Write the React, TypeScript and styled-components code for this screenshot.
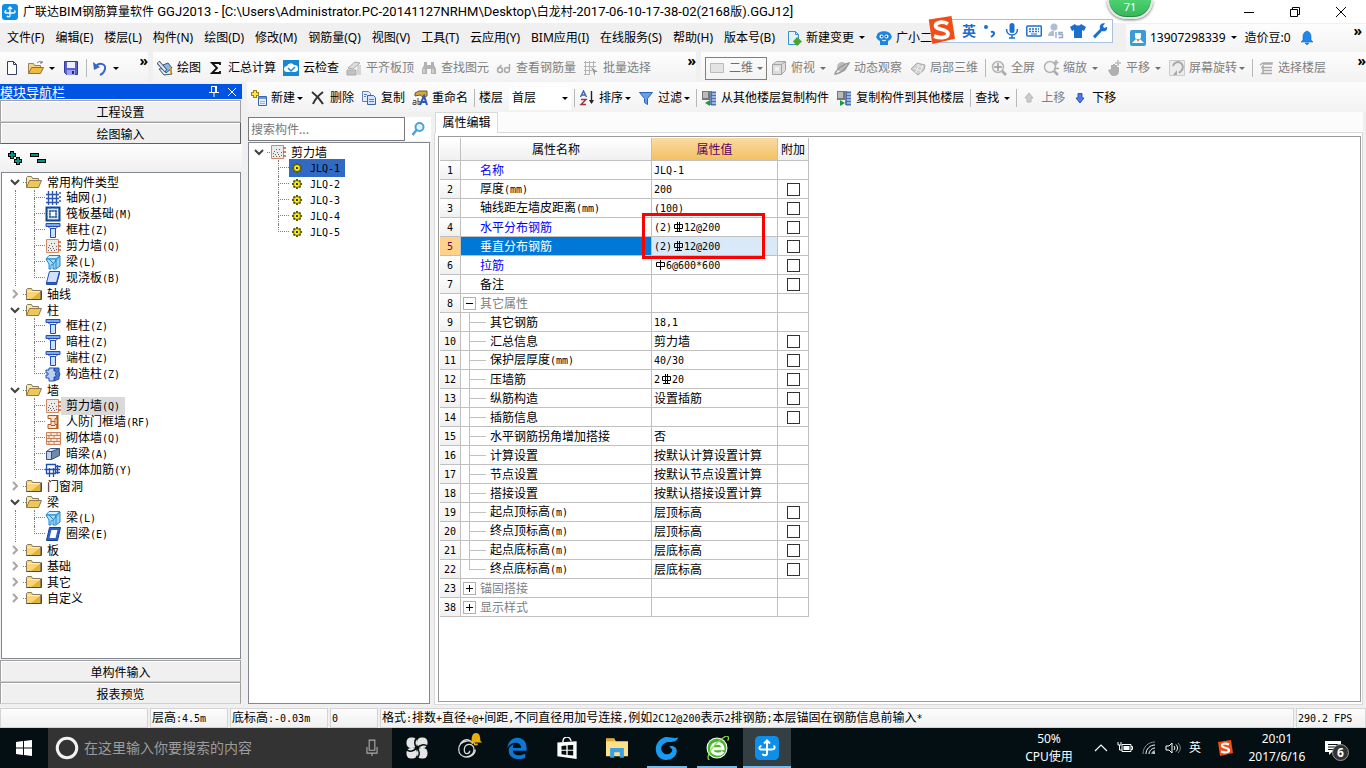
import React from "react";
import styled, { createGlobalStyle, css } from "styled-components";

const UI = `"Noto Sans", "Noto Sans CJK SC", sans-serif`;
const SONG = `"Noto Sans CJK SC", sans-serif`;

const Global = createGlobalStyle`
  *, *::before, *::after { box-sizing: border-box; }
  body { margin: 0; background: #f0f0f0; color: #000; font: 12px/16px ${UI}; }
  button, input, select { font: inherit; color: inherit; margin: 0; padding: 0; border: 0; background: none; border-radius: 0; outline: 0; }
  button { white-space: nowrap; cursor: default; }
  svg { display: block; flex: none; }
  ul { list-style: none; margin: 0; padding: 0; }
`;

/* ---------- icons ---------- */

const column = (
  <>
    <path d="M1 1.500h14v3H1z" fill="#7fa8ee" stroke="#1f4fb4" />
    <path d="M3 4.500h10l-2 2H5z" fill="#dfe9ff" stroke="#1f4fb4" />
    <path d="M5.500 6.500h5v9h-5z" fill="#cfe0ff" stroke="#1f4fb4" />
  </>
);
const scope = (
  <>
    <circle cx="7" cy="7" r="5.500" fill="#f4f4f4" stroke="#b4b4b4" strokeWidth="1.500" />
    <path d="M11 11l4 4" stroke="#aaa" strokeWidth="2.500" />
  </>
);
const floors = (
  <>
    <path d="M1 1h8v9H1z" fill="#777" />
    <path d="M2 3h5M2 5h5M2 7h5" stroke="#fff" />
    <path d="M10 2.500h5M10 5.500h5M10 8.500h5M10 11.500h5M10 14.500h5" stroke="#4a72b8" strokeWidth="2" />
    <path d="M10 1v14" stroke="#3a62a8" strokeWidth="1.500" />
  </>
);

const icons: Record<string, React.ReactNode> = {
  newDoc: <path d="M3.500 1.500h6l3 3v10h-9zM9.500 1.500v3h3" fill="#fff" stroke="#33415f" />,
  open: (
    <>
      <path d="M0.500 13.500v-10h5l1 2h6v2" fill="#f3d58a" stroke="#9b8453" />
      <path d="M0.500 13.500l3-6h12l-3 6z" fill="#f2b93f" stroke="#8b7341" />
      <path d="M9 3c2-2 4-2 5 0m0 0v-2m0 2h-2" fill="none" stroke="#5f7488" />
    </>
  ),
  save: (
    <>
      <path d="M1.500 1.500h13v13h-11l-2-2z" fill="#5a62cf" stroke="#333a9a" />
      <path d="M4 2h8v6H4z" fill="#eef1fb" />
      <path d="M4 10h8v5H4z" fill="#9aa3e8" />
      <path d="M9 11h2v3H9z" fill="#22287a" />
    </>
  ),
  undo: (
    <>
      <path d="M4 6c4-4 10-2 9 3-.5 3-3 5-5 6" fill="none" stroke="#3a66c4" strokeWidth="2" />
      <path d="M1 2l1 8 6-3z" fill="#3a66c4" />
    </>
  ),
  draw: (
    <>
      <path d="M2 9l5 6 8-1-3-6z" fill="#e7eef6" stroke="#39556f" />
      <path d="M6 5l5-2 4 5-6 5z" fill="#8db6e6" stroke="#39556f" />
      <path d="M1 2l8 9" stroke="#39556f" strokeWidth="4" />
      <path d="M1.500 2.500l7 8" stroke="#dfe9f5" strokeWidth="2" />
      <path d="M14 8v5" stroke="#d99a23" strokeWidth="2" />
    </>
  ),
  sigma: <path d="M12 5V3H4l5 5-5 5h8v-2" fill="none" stroke="#111" strokeWidth="1.800" />,
  cloud: (
    <>
      <path d="M0 0h16v16H0z" fill="#1688d4" />
      <path d="M4 12a3 3 0 010-6 4 4 0 017-1 3.500 3.500 0 011 7z" fill="#fff" />
      <path d="M5 8l3 3 4-4" fill="none" stroke="#1688d4" strokeWidth="1.500" />
    </>
  ),
  align: (
    <>
      <path d="M1 10h9v5H1z" fill="#c2c2c2" stroke="#aaa" />
      <path d="M2 8l7-6 5 1-7 6z" fill="#ddd" stroke="#aaa" />
      <path d="M12 5v10M14 5v10" stroke="#b4b4b4" />
    </>
  ),
  binocular: (
    <>
      <path d="M3 2h3v3h4V2h3v3l2 4v5h-5V9H6v5H1V9l2-4z" fill="#b2b2b2" />
      <path d="M3 9v4M12 9v4" stroke="#eee" />
    </>
  ),
  glasses: (
    <>
      <circle cx="4" cy="10" r="2.500" fill="none" stroke="#aaa" strokeWidth="1.500" />
      <circle cx="11" cy="10" r="2.500" fill="none" stroke="#aaa" strokeWidth="1.500" />
      <path d="M1.500 9l4-4M13.500 9V4" stroke="#aaa" strokeWidth="1.500" />
    </>
  ),
  batch: (
    <>
      <path d="M1 2.500h12M1 6.500h12M1 10.500h8M1 14.500h6M2.500 1v14M6.500 1v14M10.500 1v7" stroke="#b4b4b4" fill="none" />
      <path d="M8 7l7 5h-3v4z" fill="#999" />
    </>
  ),
  flat: <path d="M1.500 3.500h13v9h-13z" fill="#e3e3e3" stroke="#bbb" />,
  cube: (
    <>
      <path d="M1.500 4.500l4-3h9v9l-4 4h-9zM1.500 4.500h9v10M10.500 4.500l4-3" fill="#dcdcdc" stroke="#a4a4a4" />
      <path d="M4 7h4v4H4z" fill="#f2f2f2" />
    </>
  ),
  orbit: (
    <>
      <circle cx="8" cy="7" r="5" fill="#bbb" />
      <path d="M1 14c1-5 9-10 14-11-2 5-9 11-14 11z" fill="none" stroke="#999" strokeWidth="1.500" />
    </>
  ),
  part3d: (
    <>
      <path d="M1 9l6-6 8 2-1 5-6 5z" fill="#cfcfcf" stroke="#aaa" />
      <path d="M4 8l7 3M7 5l6 3M6 13l3-9M10 13l3-8" stroke="#eee" />
    </>
  ),
  fit: (
    <>
      {scope}
      <path d="M7 3v8M3 7h8" stroke="#999" strokeWidth="1.500" />
    </>
  ),
  zoomIn: (
    <>
      {scope}
      <path d="M13 0v5M10.500 2.500h5M11 8.500h5" stroke="#aaa" strokeWidth="1.500" />
    </>
  ),
  pan: (
    <>
      <path d="M2 10l3-1V5h2v2-3h2v3-2h2v3-1h2v5c0 2-2 4-5 4s-4-2-6-6z" fill="#b0b0b0" />
      <path d="M12 0v6M9 3h6" stroke="#bbb" strokeWidth="1.500" />
    </>
  ),
  rotate: (
    <>
      <path d="M.5.5h15v15H.5z" fill="#ececec" stroke="#ccc" />
      <path d="M4 6a5 5 0 118 5l-2 2" fill="none" stroke="#aaa" strokeWidth="2" />
      <path d="M8 10v5h-4z" fill="#aaa" />
    </>
  ),
  pickFloor: <path d="M2 5l3-2h9v1H5M3 7.500h11M5 10.500h9M3 13.500h11M5 5v9" fill="none" stroke="#aaa" strokeWidth="1.500" />,
  create: (
    <>
      <path d="M4 0v8M0 4h8" stroke="#9b8409" strokeWidth="4" />
      <path d="M4 1v6M1 4h6" stroke="#ffe34d" strokeWidth="2" />
      <path d="M7.500 6.500h8v9h-8z" fill="#e6eefb" stroke="#3c64a8" />
      <path d="M8 8h7" stroke="#6d95d8" strokeWidth="2" />
      <path d="M9 11.500h5M9 13.500h5" stroke="#9db5dc" />
    </>
  ),
  remove: <path d="M2 2c4 3 8 7 11 12M13 2C9 5 5 9 3 14" fill="none" stroke="#333" strokeWidth="2" />,
  copy: (
    <>
      <path d="M1.500 1.500h6l2 2v8h-8z" fill="#e3ecfb" stroke="#5f83c0" />
      <path d="M6.500 5.500h6l2 2v7h-8z" fill="#d5e3fa" stroke="#3c64a8" />
      <path d="M8 9.500h5M8 11.500h5M3 4.500h3M3 6.500h2" stroke="#5f83c0" />
    </>
  ),
  rename: (
    <>
      <path d="M3 3l4-2h8v5l-4 1-3-2-5 1z" fill="#d5a83c" stroke="#6a5a2a" />
      <path d="M8 15l4-9 3 9M9.500 12h4" fill="none" stroke="#2c57b4" strokeWidth="2" />
      <path d="M1 10.500h3v4H1v-2h3M6 8v6.500h2v-3H6" fill="none" stroke="#555" />
    </>
  ),
  sort: (
    <>
      <path d="M1.500 7l3-6 3 6M3 5h3" fill="none" stroke="#3d62ad" strokeWidth="1.400" />
      <path d="M2 9.500h5l-5 5h5" fill="none" stroke="#a03040" strokeWidth="1.400" />
      <path d="M12.500 1v12" stroke="#222" strokeWidth="1.400" />
      <path d="M10 10h5l-2.500 4z" fill="#222" />
    </>
  ),
  filter: <path d="M1.500 2.500h13l-5 6v6l-3-2v-4z" fill="#6a9fe8" stroke="#2b62b8" />,
  fromFloor: (
    <>
      {floors}
      <path d="M9 10v6l-5-3z" fill="#1d9a3a" />
    </>
  ),
  toFloor: (
    <>
      {floors}
      <path d="M4 10v6l5-3z" fill="#1d9a3a" />
    </>
  ),
  up: <path d="M8 3l4 5h-2v4H6V8H4z" fill="#ccc" stroke="#b5b5b5" />,
  down: <path d="M8 13L4 8h2V3.500h4V8h2z" fill="#4f7be8" stroke="#2e50b8" />,
  folder: (
    <>
      <path d="M.5 13.500v-10l1-1h4l1 2h8v9z" fill="#f6d678" stroke="#8a7a55" />
      <path d="M5 13l9-7v7z" fill="#e8b03a" />
      <path d="M1.500 5.500h12" stroke="#fff3c4" />
      <path d="M.5 13.500h15v-9" fill="none" stroke="#5f4a1c" />
    </>
  ),
  folderOpen: (
    <>
      <path d="M.5 13.500v-10l1-1h4l1 2h6v3" fill="#fbe7a6" stroke="#8a7a55" />
      <path d="M.5 13.500l3-7h12l-3 7z" fill="#f3c552" stroke="#8a7a55" />
    </>
  ),
  axis: <path d="M1 4.500h13M1 8.500h13M1 12.500h13M3.500 1v14M7.500 1v14M11.500 1v14M14 3h2M14 7h2M14 11h2" fill="none" stroke="#2d55b5" strokeWidth="1.400" />,
  raft: (
    <>
      <path d="M1.500 1.500h13v13h-13z" fill="#dce8fb" stroke="#0f4488" strokeWidth="2" />
      <path d="M5 5h6v6H5z" fill="#fff" stroke="#0f4488" />
      <path d="M5 1v14M11 1v14M1 5h14M1 11h14" stroke="#2d63ad" strokeDasharray="2 1" />
    </>
  ),
  column,
  wall: (
    <>
      <path d="M1.500 1.500h12v13h-12z" fill="#ecebe9" stroke="#d08a68" />
      <path d="M3 12.500h1M6 12.500h1M9 12.500h1M11 11.500h1M4 7.500h1M9 5.500h1M5 10.500h1M11 8.500h1M7 8.500h1M8 10.500h1M6 5.500h1M3 9.500h1" stroke="#666" />
      <path d="M13 4h3M13 8h3M13 12h3" stroke="#d05a30" strokeWidth="1.500" />
    </>
  ),
  beam: (
    <>
      <path d="M1 5l3-3.500h11l-4 3.500z" fill="#d6f0ff" stroke="#2186c8" />
      <path d="M1 5h10l-1 4-4 2v4H4v-5z" fill="#a9dcfb" stroke="#2186c8" />
      <path d="M8 10l7-8v10l-4 3H8z" fill="#8fd0f8" stroke="#2186c8" />
      <path d="M4 5l4 4M11 6v8" stroke="#2186c8" />
    </>
  ),
  slab: (
    <>
      <path d="M4.500 1.500h10l-3 11h-10z" fill="#cfe1fb" stroke="#1f4fb4" />
      <path d="M1.500 12.500h10v2h-10zM14.500 1.500v2l-3 11" fill="#2c62c8" stroke="#1f4fb4" />
    </>
  ),
  jog: (
    <>
      <path d="M9 2h5v4l1 2-1 3v2l-5 2z" fill="#4c78cc" stroke="#1f4fb4" />
      <path d="M4 2h5v3h2v2l-1 1 1 1v2H9v4H4v-3H1V9h2V7H1V4h3z" fill="#bcd0f6" stroke="#1f4fb4" />
    </>
  ),
  doorWall: (
    <>
      <path d="M3 1.500h9v3h-2v6h2v4H3v-4h3v-6H3z" fill="#fbe3cc" stroke="#b05a20" />
      <path d="M12.500 1v14" stroke="#b05a20" strokeWidth="2" />
      <path d="M6 7.500h4M6 11.500h4" stroke="#b05a20" />
    </>
  ),
  brick: (
    <>
      <path d="M1.500 2.500h14v12h-14z" fill="#fbe9dc" stroke="#c88058" />
      <path d="M1 5.500h14M1 8.500h14M1 11.500h14M6 3v3M12 3v3M4 6v3M9 6v3M6 9v3M12 9v3M4 12v3M9 12v3" stroke="#c88058" />
    </>
  ),
  darkBeam: (
    <>
      <path d="M1.500 5.500l4-3h9l-3 3z" fill="#dfe6f0" stroke="#38507a" />
      <path d="M1.500 5.500h5v8h-5z" fill="#c3d3e6" stroke="#38507a" />
      <path d="M6.500 5.500l8-3v7l-8 4z" fill="#6d8ab0" stroke="#38507a" />
    </>
  ),
  rebar: <path d="M1.500 2.500h9v9h-9zM4.500 6v9M8.500 6v9M0 7.500h15M10 4.500h6M11 10.500h4M12.500 3v9" fill="none" stroke="#1f4fb4" strokeWidth="1.300" />,
  ring: (
    <>
      <path d="M4.500 1.500h11l-3 13h-11z" fill="#2c62c8" stroke="#173f96" />
      <path d="M6.500 4h6l-2 8h-6z" fill="#fff" />
    </>
  ),
  gear: (
    <>
      <path d="M8 3v10M3 8h10M4.500 4.500l7 7M11.500 4.500l-7 7" stroke="#5c5800" strokeWidth="2" />
      <circle cx="8" cy="8" r="3.500" fill="#f5ee20" stroke="#5c5800" />
      <path d="M7 7h2v2H7z" fill="#3a3800" />
    </>
  ),
  search: (
    <>
      <circle cx="9.500" cy="6" r="4" fill="#e8f4fd" stroke="#4aa3dc" strokeWidth="2" />
      <path d="M6.500 9l-4 5" stroke="#4aa3dc" strokeWidth="2.500" />
    </>
  ),
  change: (
    <>
      <path d="M2.500 1.500h7l3 3v10h-10z" fill="#e4f2fd" stroke="#3f8fce" />
      <path d="M9.500 1.500v3h3" fill="none" stroke="#3f8fce" />
      <path d="M11 7l5 4.500-5 4.500-4-4.500z" fill="#4ba52a" />
    </>
  ),
  robot: (
    <>
      <path d="M1 5c1-5 13-5 14 0l1 2-2 3-2 1v4H4v-4l-2-1-2-3z" fill="#1c86dc" />
      <circle cx="5.500" cy="6.500" r="2" fill="#fff" />
      <circle cx="10.500" cy="6.500" r="2" fill="#fff" />
      <circle cx="5.800" cy="6.500" r="1" fill="#0d4d8c" />
      <circle cx="10.200" cy="6.500" r="1" fill="#0d4d8c" />
      <path d="M6 10c1 1 3 1 4 0" stroke="#fff" fill="none" />
    </>
  ),
  user: (
    <>
      <rect width="16" height="16" rx="2" fill="#3b9bd6" />
      <path d="M5 3h6v4c0 3-6 3-6 0z" fill="#fff" />
      <path d="M2 13l4-4 2 2 2-2 4 4z" fill="#fff" />
      <path d="M7 10l1 2 1-2z" fill="#e0703c" />
    </>
  ),
  bell: <path d="M8 1c3 1 4 3 4 6v3l2 2H2l2-2V7c0-3 1-5 4-6zM6 13h4l-2 2z" fill="#1e88f0" stroke="#1565c0" strokeWidth=".6" />,
  logo: (
    <>
      <rect width="16" height="16" rx="3" fill="#0d8ee9" />
      <path d="M6 5l2-2 2 2M8 3v8.500c0 1.800-2.500 1.800-3 .3M4.300 6.500C2.500 7 2.500 9 4 9h7.500c2 0 2-2 .8-2.500" fill="none" stroke="#fff" strokeWidth="1.300" />
    </>
  ),
  pin: <path d="M5 2.500h6M5.500 2v6M9.500 2v6M10.500 2v6M3 8.500h10M8 9v4" stroke="#fff" fill="none" />,
  closeSmall: <path d="M4 4l8 8M12 4l-8 8" stroke="#fff" />,
  expandAll: (
    <>
      <path d="M5 1v8M1 5h8M11 7v8M7 11h8" stroke="#000" strokeWidth="4" />
      <path d="M5 2v6M2 5h6M11 8v6M8 11h6" stroke="#009688" strokeWidth="2" />
    </>
  ),
  collapseAll: (
    <>
      <path d="M0 5h9M7 11h9" stroke="#000" strokeWidth="4" />
      <path d="M1 5h7M8 11h7" stroke="#009688" strokeWidth="2" />
    </>
  ),
  expanded: <path d="M4 6l4 4 4-4" fill="none" stroke="#404040" strokeWidth="2" />,
  collapsed: <path d="M6 4l4 4-4 4" fill="none" stroke="#a6a6a6" strokeWidth="2" />,
  minimize: <path d="M3 8.500h10" stroke="#000" />,
  restore: <path d="M3.500 5.500h7v7h-7zM5.500 5v-1.500h7v7H11" fill="none" stroke="#000" />,
  close: <path d="M3 3l10 10M13 3L3 13" stroke="#000" />,
  sogou: (
    <>
      <path d="M1 2l13-2 2 13-13 3z" fill="#f04e16" />
      <path d="M12 4.500C8 2.500 4.500 4 5 6s7 1.500 7 4-4 3-8 1.500" fill="none" stroke="#fff" strokeWidth="2.200" />
    </>
  ),
  mic: (
    <>
      <rect x="5.500" y="0" width="5" height="10" rx="2.500" fill="#1a6fd0" />
      <path d="M2.500 6c0 8 11 8 11 0M8 12v3M5 15h6" fill="none" stroke="#1a6fd0" strokeWidth="1.500" />
    </>
  ),
  keyboard: (
    <>
      <rect x=".8" y="3" width="14.500" height="10" rx="1" fill="none" stroke="#1a6fd0" strokeWidth="1.500" />
      <path d="M3 6h10M3 8.500h10" stroke="#1a6fd0" strokeWidth="1.500" strokeDasharray="2 1" />
      <path d="M5 11h6" stroke="#1a6fd0" />
    </>
  ),
  person: (
    <>
      <circle cx="6" cy="4" r="3.500" fill="#aebfd4" />
      <path d="M0 13c0-7 12-7 12 0z" fill="#aebfd4" />
      <path d="M6 8h10v8H6z" fill="#fff" />
      <path d="M8 9v6M15 9.500h-4v2h3.500v3H10.500" fill="none" stroke="#93a9c6" strokeWidth="1.400" />
    </>
  ),
  shirt: <path d="M5 1c1 2 5 2 6 0l5 3-2 4-2-1v8H4V7L2 8 0 4z" fill="#1a6fd0" />,
  wrench: <path d="M15 4l-3 1-1-2 2-2.500C9-.5 7 3 8 6l-7 7 2 2.500L10 8c3 1 6-1 5-4z" fill="#1a6fd0" />,
  comma: (
    <>
      <circle cx="4" cy="4" r="2" fill="#1a6fd0" />
      <path d="M9 9c3-1 5 2 0 5" fill="none" stroke="#1a6fd0" strokeWidth="2" />
    </>
  ),
  windows: <path d="M0 2l7-1v6.500H0zM8 1l8-1v7.500H8zM0 8.500h7V15l-7-1zM8 8.500h8V16l-8-1z" fill="#fff" />,
  cortana: <circle cx="8" cy="8" r="6.500" fill="none" stroke="#f2f2f2" strokeWidth="2" />,
  micLine: <path d="M5.500 1h5v9h-5zM3.500 7v5.500h9V7M8 12.500V15" fill="none" stroke="#aaa" />,
  pinwheel: (
    <>
      <g fill="#e6e6e6">
        <rect x="1" y="1" width="7" height="7" rx="3" />
        <rect x="8" y="1" width="7" height="7" rx="3" />
        <rect x="1" y="8" width="7" height="7" rx="3" />
        <rect x="8" y="8" width="7" height="7" rx="3" />
      </g>
      <path d="M8 1c-2 2-2 5 0 7 2-2 5-3 7-1M8 8c2 2 2 5 0 7M1 9c2 2 5 1 7-1" fill="none" stroke="#030f12" strokeWidth="1" />
    </>
  ),
  swirl: <path d="M14 6c-1-5-12-4-12 3s10 7 11 1-7-6-7-1 4 3 4 1M3 5c4-5 8-3 9 0M5 14c4 2 9-1 9-5" fill="none" stroke="#ddd" strokeWidth=".9" />,
  swirlBell: <path d="M8 1c4 0 5 4 5 9l2 2H1l2-2c0-5 1-9 5-9zM6 13h4v2H6z" fill="#e9ae0c" />,
  edge: <path d="M1 8C2-2 15-2 15 8v2H5c0 4 6 4 9 2v3C8 18 2 15 2 10c0-3 2-4 4-5-1 1-1 2-1 3h6c0-5-7-5-10 0z" fill="#0b78d8" />,
  store: (
    <>
      <path d="M1 4l14-1v13L1 14z" fill="#fff" />
      <path d="M5 4c0-5 5-5 6-1" fill="none" stroke="#fff" />
      <path d="M4 6.500l3.500-.3v3H4zM8.500 6l4-.2v3.400h-4zM4 10h3.500v3L4 12.500zM8.500 10h4v3.500l-4-.4z" fill="#030f12" />
    </>
  ),
  explorer: (
    <>
      <path d="M0 1h6l1 2h9v11H0z" fill="#ffe08a" />
      <path d="M0 1h6l1 2H0z" fill="#e8a92e" />
      <path d="M3 15V8h10v7h-3v-4H6v4z" fill="#3aa0e0" />
    </>
  ),
  gSwirl: (
    <path d="M15.500 1c-1 3-4 3-7 3-4 1-5 4-4 6 2 4 7 2 7-1l-2-2c3-1 5 1 5 3 0 4-4 6-7 6C-1 16-2 4 6 1c3-1 6 1 9.500 0z" fill="#1a9af0" />
  ),
  ie: (
    <>
      <circle cx="8" cy="8" r="7" fill="#fff" />
      <circle cx="8" cy="8" r="6.300" fill="#49b82c" />
      <path d="M4.500 8.500h7.500c0-5-7.500-5-7.500 0 0 4 6 4.500 7.500 2" fill="none" stroke="#fff" strokeWidth="2" />
      <path d="M3 16C0 15 4 6 14 0c2 0 2 2 1 3" fill="none" stroke="#8ade4a" strokeWidth=".8" />
    </>
  ),
  chevronUp: <path d="M2 11l6-6 6 6" fill="none" stroke="#fff" strokeWidth="1.200" />,
  battery: (
    <>
      <path d="M5 4.500h9v7H5zM14 6.500h1.500v3H14" fill="none" stroke="#fff" />
      <path d="M6.500 6h6v4h-6z" fill="#fff" />
      <path d="M1 2v3h3V2M2.500 5v5H5" fill="none" stroke="#fff" />
    </>
  ),
  wifi: (
    <>
      <path d="M2 14C2 7 7 2 14 2" fill="none" stroke="#888" />
      <path d="M5 14c0-5 4-9 9-9M8 14c0-3 3-6 6-6M11 14c0-2 1-3 3-3" fill="none" stroke="#fff" />
      <circle cx="13" cy="13" r="1" fill="#fff" />
    </>
  ),
  volume: (
    <>
      <path d="M1 6h3l3-3v10l-3-3H1z" fill="none" stroke="#fff" />
      <path d="M9 6c1 1 1 3 0 4M11 4.500c2 2 2 5 0 7" fill="none" stroke="#fff" />
      <path d="M13 3c3 3 3 7 0 10" fill="none" stroke="#888" />
    </>
  ),
  notice: (
    <>
      <path d="M0 1h16v11H7l-3 3v-3H0z" fill="#fff" />
      <path d="M3 4.500h10M3 7h10M3 9.500h6" stroke="#030f12" />
    </>
  ),
};

const Icon = ({ name, size = 16 }: { name: string; size?: number }) => (
  <svg width={size} height={size} viewBox="0 0 16 16" aria-hidden="true">
    {icons[name]}
  </svg>
);

/* ---------- text in the fixed-pitch list style ---------- */

const HalfWidth = styled.span`
  font: 10px/16px "DejaVu Sans Mono", monospace;
  white-space: pre;
`;

const Rebar = styled.svg`
  display: inline-block;
  vertical-align: -1px;
`;

const symbols: Record<string, React.ReactNode> = {
  "\u2295": <path d="M2.500 3.500h8v4h-8zM5.500 1v9M7.500 1v9M3 10.500h7" fill="none" stroke="#000" />,
  "\u03c6": <path d="M2.500 3.500h8v4h-8zM6.500 1v10" fill="none" stroke="#000" />,
};

/* Chinese runs keep the full em, Latin runs take half an em per letter. */
const Song = ({ children }: { children: string }) => (
  <>
    {children.split(/([\x20-\x7e]+|[\u2295\u03c6])/).map((run, i) => {
      if (symbols[run]) {
        return (
          <Rebar key={i} width="12" height="11" viewBox="0 0 12 11">
            {symbols[run]}
          </Rebar>
        );
      }
      return /^[\x20-\x7e]+$/.test(run) ? <HalfWidth key={i}>{run}</HalfWidth> : run;
    })}
  </>
);

/* ---------- window frame ---------- */

const Screen = styled.div`
  position: relative;
  display: flex;
  flex-direction: column;
  min-height: 100vh;
  overflow: hidden;
`;

const TitleBar = styled.header`
  display: flex;
  align-items: center;
  height: 23px;
  padding: 0 17px 0 2px;
  gap: 5px;
  background: #fff;
`;

const Title = styled.h1`
  flex: 1;
  margin: 0;
  font: 12px/20px ${UI};
  white-space: nowrap;
`;

const TitleLatin = styled.span`
  font: 13px/20px Roboto, sans-serif;
  white-space: pre;
`;

const WindowButtons = styled.div`
  display: flex;
  gap: 30px;
`;

const MenuBar = styled.nav`
  display: flex;
  align-items: center;
  height: 29px;
  padding-left: 7px;
  gap: 11px;
  white-space: nowrap;
`;

const IconText = styled.button<{ $dim?: boolean }>`
  display: flex;
  align-items: center;
  gap: 4px;
  color: ${(p) => (p.$dim ? "#808080" : "#000")};
`;

const Arrow = styled.i<{ $dim?: boolean; $near?: boolean }>`
  flex: none;
  width: 6px;
  margin-left: ${(p) => (p.$near ? "-2px" : "1px")};
  border: 3px solid transparent;
  border-top-color: ${(p) => (p.$dim ? "#707070" : "#000")};
  border-bottom: 0;
`;

const Account = styled.div`
  display: flex;
  flex: none;
  align-items: center;
  width: 240px;
  height: 28px;
  margin-left: auto;
  padding: 0 4px;
  gap: 8px;
  background: linear-gradient(#fdfdfd, #f3f3f3);
`;

const More = styled.button`
  align-self: flex-start;
  font: bold 14px/14px ${UI};
`;

const ToolRow = styled.div`
  display: flex;
  align-items: center;
  height: 30px;
  gap: 5px;
  white-space: nowrap;
`;

const ToolGroup = styled.div<{ $w?: number; $loose?: boolean }>`
  display: flex;
  align-items: center;
  flex: ${(p) => (p.$w ? `0 0 ${p.$w}px` : "1")};
  height: 30px;
  padding: 2px 0 0 4px;
  gap: ${(p) => (p.$loose ? 8 : 7)}px;
  background: linear-gradient(#fdfdfd, #f2f2f2);
`;

const Push = styled.span`
  flex: 1;
`;

const Divider = styled.i`
  width: 1px;
  height: 18px;
  margin: 0 -3px 0 -1px;
  background: #b8b8b8;
`;

const Combo = styled.label<{ $framed?: boolean }>`
  display: flex;
  align-items: center;
  width: 62px;
  height: 23px;
  padding: 0 3px;
  gap: 4px;
  margin: 0 -3px 0 -1px;
  background: #fff;
  ${(p) =>
    p.$framed &&
    css`
      margin: 0 -4px 0 0;
      background: none;
      border: 1px solid #808080;
      color: #707070;
    `}
  select {
    appearance: none;
    flex: 1;
    min-width: 0;
  }
`;

/* ---------- left navigation ---------- */

const Work = styled.main`
  display: flex;
  flex: 1;
  gap: 5px;
`;

const Side = styled.aside`
  display: flex;
  flex-direction: column;
  width: 242px;
  padding-bottom: 2px;
`;

const SideTitle = styled.div`
  display: flex;
  align-items: center;
  height: 15px;
  padding: 0 2px 0 0;
  gap: 2px;
  margin: 2px 0 1px;
  color: #fff;
  background: #0054e3;
  font: 13px/15px ${SONG};
  button { height: 15px; }
`;

const SideTab = styled.button<{ $active?: boolean }>`
  height: 22px;
  margin-right: 1px;
  padding-top: 1px;
  border: 1px solid #a0a0a0;
  border-right-color: ${(p) => (p.$active ? "#606060" : "#a0a0a0")};
  border-bottom-color: ${(p) => (p.$active ? "#606060" : "#d0d0d0")};
  background: #f0f0f0;
  box-shadow: inset 1px 1px #fff;
  font-family: ${SONG};
`;

const SideTools = styled.div`
  display: flex;
  align-items: center;
  height: 28px;
  padding: 0 7px;
  gap: 7px;
  background: linear-gradient(#fefefe, #f0f0f0);
`;

const Tree = styled.ul<{ $inset: number }>`
  flex: 1;
  margin: 0 1px 1px;
  padding: 1px 0 2px ${(p) => p.$inset}px;
  background: #fff;
  border: 1px solid #828790;
  font-family: ${SONG};
`;

const Node = styled.li`
  display: flex;
  align-items: center;
  height: 16px;
  white-space: nowrap;
`;

const Stub = styled.i`
  width: 3px;
  border-top: 1px dotted #808080;
`;

const Rail = styled.i<{ $hidden?: boolean }>`
  width: 19px;
  height: 16px;
  margin-left: 8px;
  border-left: 1px dotted ${(p) => (p.$hidden ? "transparent" : "#808080")};
`;

const Branch = styled.i<{ $last?: boolean }>`
  width: 11px;
  height: 16px;
  &::before {
    content: "";
    display: block;
    height: 8px;
    border-left: 1px dotted #808080;
    border-bottom: 1px dotted #808080;
  }
  &::after {
    content: "";
    display: ${(p) => (p.$last ? "none" : "block")};
    height: 8px;
    border-left: 1px dotted #808080;
  }
`;

const NodeLabel = styled.span<{ $on?: boolean }>`
  padding: 0 5px;
  background: ${(p) => (p.$on ? "#d9d9d9" : "none")};
`;

const Element = styled.span<{ $on?: boolean }>`
  display: flex;
  align-items: center;
  background: ${(p) => (p.$on ? "#316ac5" : "none")};
`;

/* ---------- right part ---------- */

const Main = styled.div`
  display: flex;
  flex: 1;
  flex-direction: column;
  min-width: 0;
`;

const Panels = styled.div`
  display: flex;
  flex: 1;
  gap: 3px;
  padding-bottom: 1px;
`;

const ListPanel = styled.section`
  display: flex;
  flex-direction: column;
  width: 184px;
  padding-top: 5px;
`;

const SearchBar = styled.div`
  display: flex;
  height: 24px;
  margin: 0 0 1px 1px;
  background: #fff;
  input {
    width: 157px;
    padding: 0 2px;
    border: 1px solid #7a7a7a;
    font: 12px/20px ${SONG};
    &::placeholder { color: #777; opacity: 1; }
  }
  button {
    display: grid;
    flex: 1;
    place-items: center;
  }
`;

const Props = styled.section`
  display: flex;
  flex: 1;
  flex-direction: column;
  padding-right: 3px;
`;

const TabStrip = styled.div`
  display: flex;
  height: 21px;
  margin-left: 1px;
  &::after {
    content: "";
    flex: 1;
    border-bottom: 1px solid #d9d9d9;
    background: #fcfcfc;
  }
`;

const Tab = styled.button`
  width: 63px;
  padding-bottom: 2px;
  border: 1px solid #d9d9d9;
  border-bottom: 0;
  background: #fff;
  font-family: ${SONG};
`;

const PropsBody = styled.div`
  display: flex;
  flex: 1;
  padding: 3px 1px 2px 3px;
  border: 1px solid #d9d9d9;
  border-top: 0;
  background: #fff;
`;

const GridFrame = styled.div`
  flex: 1;
  padding: 1px;
  border: 1px solid #9a9a9f;
`;

const GridArea = styled.div`
  position: relative;
  width: 369px;
`;

const Grid = styled.table`
  width: 100%;
  table-layout: fixed;
  border-spacing: 0;
  font: 12px/16px ${SONG};
  th, td {
    height: 19px;
    padding: 0;
    border: solid #c0c0c0;
    border-width: 0 1px 1px 0;
    font-weight: normal;
    text-align: left;
    white-space: nowrap;
  }
  thead th { height: 23px; text-align: center; }
  input {
    display: block;
    appearance: none;
    width: 13px;
    height: 13px;
    margin: 0 auto;
    border: 1px solid #333;
    background: #fff;
  }
`;

const HeadCell = styled.th<{ $hot?: boolean }>`
  color: ${(p) => (p.$hot ? "#5c0060" : "#000")};
  background: ${(p) => (p.$hot ? "linear-gradient(#fbdba3, #f2c163)" : "linear-gradient(#fff, #f0f0f0)")};
`;

const IndexCell = styled(HeadCell)`
  && { text-align: center; }
  ${(p) => p.$hot && css`background: #ffd28c;`}
`;

const NameCell = styled.th<{ $selected?: boolean; $tone: string }>`
  color: ${(p) => (p.$selected ? "#fff" : p.$tone)};
  background: ${(p) => (p.$selected ? "#0078d7" : "#fff")};
  > div {
    display: flex;
    align-items: center;
    height: 18px;
  }
`;

const ValueCell = styled.td<{ $selected?: boolean }>`
  && { padding-left: 2px; }
  background: ${(p) => (p.$selected ? "#d9e9f8" : "#fff")};
`;

const Indent = styled.i`
  width: 19px;
`;

const Toggle = styled.button`
  display: grid;
  place-items: center;
  width: 13px;
  height: 13px;
  margin: 0 4px 0 2px;
  border: 1px solid #b0b0b0;
`;

const GridBranch = styled.i<{ $last?: boolean }>`
  align-self: stretch;
  width: 17px;
  margin: 0 4px 0 8px;
  &::before {
    content: "";
    display: block;
    height: 10px;
    border: solid #c0c0c0;
    border-width: 0 0 1px 1px;
  }
  &::after {
    content: "";
    display: ${(p) => (p.$last ? "none" : "block")};
    height: 9px;
    border-left: 1px solid #c0c0c0;
  }
`;

const RedFrame = styled.div`
  position: absolute;
  left: 202px;
  top: 75px;
  width: 123px;
  height: 46px;
  border: 3px solid #f00;
  pointer-events: none;
`;

/* ---------- status bar and task bar ---------- */

const StatusBar = styled.footer`
  display: flex;
  height: 22px;
  padding: 2px 0 0;
  gap: 2px;
  font-family: ${SONG};
  white-space: nowrap;
`;

const StatusCell = styled.span<{ $w?: number }>`
  flex: ${(p) => (p.$w ? `0 0 ${p.$w}px` : "1")};
  padding: 0 1px;
  border: 1px solid #d4d4d4;
  background: linear-gradient(#fdfdfd, #f0f0f0);
`;

const TaskBar = styled.footer`
  display: flex;
  height: 40px;
  color: #fff;
  background: #030f12;
`;

const TaskButton = styled.button<{ $active?: boolean; $running?: boolean }>`
  position: relative;
  display: grid;
  place-items: center;
  width: 48px;
  background: ${(p) => (p.$active ? "#333f43" : "none")};
  ${(p) =>
    (p.$running || p.$active) &&
    css`
      &::after {
        content: "";
        position: absolute;
        left: ${p.$active ? 0 : 4}px;
        right: ${p.$active ? 0 : 4}px;
        bottom: 0;
        height: 2px;
        background: #76b9ed;
      }
    `}
`;

const AppButtons = styled.div`
  display: flex;
  gap: 2px;
  padding-left: 1px;
`;

const TaskSearch = styled.div`
  display: flex;
  align-items: center;
  width: 344px;
  padding: 0 11px 0 7px;
  gap: 5px;
  background: #333;
  input {
    flex: 1;
    min-width: 0;
    font: 14px/20px ${UI};
    &::placeholder { color: #9c9c9c; opacity: 1; }
  }
`;

const Tray = styled.div`
  display: flex;
  align-items: center;
  margin-left: auto;
  padding-right: 17px;
  gap: 8px;
`;

const Stack = styled.div`
  width: 72px;
  line-height: 18px;
  text-align: center;
`;

const Corner = styled.span`
  position: absolute;
  left: 26px;
  top: 4px;
`;

const NoticeButton = styled.button`
  position: relative;
  width: 24px;
  height: 24px;
  margin-left: 4px;
`;

const Count = styled.span`
  position: absolute;
  left: 7px;
  top: 8px;
  width: 17px;
  height: 17px;
  border: 1px solid #999;
  border-radius: 50%;
  background: #333;
  font: bold 12px/15px ${UI};
`;

/* ---------- floating helpers ---------- */

const SpeedBall = styled.div`
  position: absolute;
  right: 213px;
  top: 0;
  width: 46px;
  height: 19px;
  padding-top: 1px;
  border: 2px solid #e6e6e6;
  border-top: 0;
  border-radius: 0 0 23px 23px;
  background: linear-gradient(#4fd070, #34b558);
  box-shadow: 0 1px 3px #777, inset 0 -1px #258a40;
  color: #fff;
  font: 11px/12px ${UI};
  text-align: center;
`;

const InputMethod = styled.div`
  position: absolute;
  right: 253px;
  top: 19px;
  display: flex;
  align-items: center;
  width: 178px;
  height: 24px;
  padding: 0 4px 0 26px;
  justify-content: space-between;
  border: 1px solid #a9c0dc;
  background: #fff;
  color: #1a6fd0;
  font: bold 14px/22px ${UI};
`;

const SogouMark = styled.span`
  position: absolute;
  left: -9px;
  top: -4px;
`;

/* ---------- data ---------- */

const menus = ["文件(F)", "编辑(E)", "楼层(L)", "构件(N)", "绘图(D)", "修改(M)", "钢筋量(Q)", "视图(V)", "工具(T)", "云应用(Y)", "BIM应用(I)", "在线服务(S)", "帮助(H)", "版本号(B)"];

const titleText = "广联达BIM钢筋算量软件 GGJ2013 - [C:\\Users\\Administrator.PC-20141127NRHM\\Desktop\\白龙村-2017-06-10-17-38-02(2168版).GGJ12]";

type Branchy = { name: string; open?: boolean; items?: [string, string][] };
const navTree: Branchy[] = [
  { name: "常用构件类型", open: true, items: [["axis", "轴网(J)"], ["raft", "筏板基础(M)"], ["column", "框柱(Z)"], ["wall", "剪力墙(Q)"], ["beam", "梁(L)"], ["slab", "现浇板(B)"]] },
  { name: "轴线" },
  { name: "柱", open: true, items: [["column", "框柱(Z)"], ["column", "暗柱(Z)"], ["column", "端柱(Z)"], ["jog", "构造柱(Z)"]] },
  { name: "墙", open: true, items: [["wall", "剪力墙(Q)"], ["doorWall", "人防门框墙(RF)"], ["brick", "砌体墙(Q)"], ["darkBeam", "暗梁(A)"], ["rebar", "砌体加筋(Y)"]] },
  { name: "门窗洞" },
  { name: "梁", open: true, items: [["beam", "梁(L)"], ["ring", "圈梁(E)"]] },
  { name: "板" },
  { name: "基础" },
  { name: "其它" },
  { name: "自定义" },
];

const walls = ["JLQ-1", "JLQ-2", "JLQ-3", "JLQ-4", "JLQ-5"];

type Row = { n: number; name: string; value?: string; check?: boolean; key?: boolean; kind?: "child" | "last" | "open" | "shut" };
const rows: Row[] = [
  { n: 1, name: "名称", value: "JLQ-1", key: true },
  { n: 2, name: "厚度(mm)", value: "200", check: true },
  { n: 3, name: "轴线距左墙皮距离(mm)", value: "(100)", check: true },
  { n: 4, name: "水平分布钢筋", value: "(2)\u229512@200", check: true, key: true },
  { n: 5, name: "垂直分布钢筋", value: "(2)\u229512@200", check: true, key: true },
  { n: 6, name: "拉筋", value: "\u03c66@600*600", check: true, key: true },
  { n: 7, name: "备注", check: true },
  { n: 8, name: "其它属性", kind: "open" },
  { n: 9, name: "其它钢筋", value: "18,1", kind: "child" },
  { n: 10, name: "汇总信息", value: "剪力墙", check: true, kind: "child" },
  { n: 11, name: "保护层厚度(mm)", value: "40/30", check: true, kind: "child" },
  { n: 12, name: "压墙筋", value: "2\u229520", check: true, kind: "child" },
  { n: 13, name: "纵筋构造", value: "设置插筋", check: true, kind: "child" },
  { n: 14, name: "插筋信息", check: true, kind: "child" },
  { n: 15, name: "水平钢筋拐角增加搭接", value: "否", kind: "child" },
  { n: 16, name: "计算设置", value: "按默认计算设置计算", kind: "child" },
  { n: 17, name: "节点设置", value: "按默认节点设置计算", kind: "child" },
  { n: 18, name: "搭接设置", value: "按默认搭接设置计算", kind: "child" },
  { n: 19, name: "起点顶标高(m)", value: "层顶标高", check: true, kind: "child" },
  { n: 20, name: "终点顶标高(m)", value: "层顶标高", check: true, kind: "child" },
  { n: 21, name: "起点底标高(m)", value: "层底标高", check: true, kind: "child" },
  { n: 22, name: "终点底标高(m)", value: "层底标高", check: true, kind: "last" },
  { n: 23, name: "锚固搭接", kind: "shut" },
  { n: 38, name: "显示样式", kind: "shut" },
];

type ToolProps = { icon?: string; text?: string; dim?: boolean; drop?: boolean | "near" };
const Tool = ({ icon, text, dim, drop }: ToolProps) => (
  <IconText $dim={dim} aria-label={text || icon}>
    {icon && <Icon name={icon} />}
    {text}
    {drop && <Arrow $dim={dim} $near={drop === "near"} />}
  </IconText>
);

const NavTree = () => (
  <Tree $inset={5}>
    {navTree.map((group, g) => (
      <React.Fragment key={g}>
        <Node>
          <Icon name={group.open ? "expanded" : "collapsed"} />
          <Stub />
          <Icon name={group.open ? "folderOpen" : "folder"} />
          <NodeLabel>{group.name}</NodeLabel>
        </Node>
        {group.items?.map(([icon, label], i) => (
          <Node key={label}>
            <Rail />
            <Branch $last={i === group.items!.length - 1} />
            <Icon name={icon} />
            <NodeLabel $on={g === 3 && i === 0}>
              <Song>{label}</Song>
            </NodeLabel>
          </Node>
        ))}
      </React.Fragment>
    ))}
  </Tree>
);

const PropertyGrid = () => (
  <GridArea>
    <Grid>
      <colgroup>
        <col width="21" />
        <col width="191" />
        <col width="126" />
        <col width="31" />
      </colgroup>
      <thead>
        <tr>
          <HeadCell />
          <HeadCell>属性名称</HeadCell>
          <HeadCell $hot>属性值</HeadCell>
          <HeadCell>附加</HeadCell>
        </tr>
      </thead>
      <tbody>
        {rows.map((r) => {
          const selected = r.n === 5;
          const group = r.kind === "open" || r.kind === "shut";
          return (
            <tr key={r.n}>
              <IndexCell $hot={selected}>
                <Song>{String(r.n)}</Song>
              </IndexCell>
              <NameCell $selected={selected} $tone={group ? "#808080" : r.key ? "#0000ff" : "#000"}>
                <div>
                  {!r.kind && <Indent />}
                  {group && (
                    <Toggle aria-label={r.name}>
                      <svg width="9" height="9" viewBox="0 0 9 9">
                        <path d={r.kind === "open" ? "M1 4.500h7" : "M1 4.500h7M4.500 1v7"} stroke="#000" />
                      </svg>
                    </Toggle>
                  )}
                  {(r.kind === "child" || r.kind === "last") && <GridBranch $last={r.kind === "last"} />}
                  <span>
                    <Song>{r.name}</Song>
                  </span>
                </div>
              </NameCell>
              <ValueCell $selected={selected}>
                <Song>{r.value || ""}</Song>
              </ValueCell>
              <td>{r.check && <input type="checkbox" aria-label={`附加 ${r.name}`} />}</td>
            </tr>
          );
        })}
      </tbody>
    </Grid>
    <RedFrame />
  </GridArea>
);

export default function App() {
  return (
    <Screen>
      <Global />
      <TitleBar>
        <Icon name="logo" />
        <Title>
          {titleText.split(/([\x20-\x7e]+)/).map((run, i) => (i % 2 ? <TitleLatin key={i}>{run}</TitleLatin> : run))}
        </Title>
        <WindowButtons>
          <button aria-label="最小化"><Icon name="minimize" /></button>
          <button aria-label="还原"><Icon name="restore" /></button>
          <button aria-label="关闭"><Icon name="close" /></button>
        </WindowButtons>
      </TitleBar>
      <MenuBar>
        {menus.map((m) => (
          <button key={m}>{m}</button>
        ))}
        <Tool icon="change" text="新建变更" drop />
        <Tool icon="robot" text="广小二" />
        <Account>
          <Tool icon="user" text="13907298339" drop />
          <span>造价豆:0</span>
          <Icon name="bell" />
          <Push />
          <More aria-label="更多">»</More>
        </Account>
      </MenuBar>

      <ToolRow>
        <ToolGroup $w={148} $loose>
          <Tool icon="newDoc" />
          <Tool icon="open" drop />
          <Tool icon="save" />
          <Divider />
          <Tool icon="undo" drop />
          <Push />
          <More aria-label="更多">»</More>
        </ToolGroup>
        <ToolGroup $w={543}>
          <Tool icon="draw" text="绘图" />
          <Tool icon="sigma" text="汇总计算" />
          <Tool icon="cloud" text="云检查" />
          <Tool icon="align" text="平齐板顶" dim />
          <Tool icon="binocular" text="查找图元" dim />
          <Tool icon="glasses" text="查看钢筋量" dim />
          <Tool icon="batch" text="批量选择" dim />
          <Push />
          <More aria-label="更多">»</More>
        </ToolGroup>
        <ToolGroup $loose>
          <Combo $framed>
            <Icon name="flat" />
            <select aria-label="视图模式"><option>二维</option></select>
            <Arrow $dim $near />
          </Combo>
          <Tool icon="cube" text="俯视" dim drop />
          <Tool icon="orbit" text="动态观察" dim />
          <Tool icon="part3d" text="局部三维" dim />
          <Divider />
          <Tool icon="fit" text="全屏" dim />
          <Tool icon="zoomIn" text="缩放" dim drop />
          <Tool icon="pan" text="平移" dim drop />
          <Tool icon="rotate" text="屏幕旋转" dim drop="near" />
          <Divider />
          <Tool icon="pickFloor" text="选择楼层" dim />
          <Push />
          <More aria-label="更多">»</More>
        </ToolGroup>
      </ToolRow>

      <Work>
        <Side>
          <SideTitle>
            模块导航栏
            <Push />
            <button aria-label="固定"><Icon name="pin" /></button>
            <button aria-label="关闭导航栏"><Icon name="closeSmall" /></button>
          </SideTitle>
          <SideTab>工程设置</SideTab>
          <SideTab $active>绘图输入</SideTab>
          <SideTools>
            <button aria-label="全部展开"><Icon name="expandAll" /></button>
            <button aria-label="全部折叠"><Icon name="collapseAll" /></button>
          </SideTools>
          <NavTree />
          <SideTab>单构件输入</SideTab>
          <SideTab>报表预览</SideTab>
        </Side>

        <Main>
          <ToolRow>
            <ToolGroup>
              <Tool icon="create" text="新建" drop="near" />
              <Tool icon="remove" text="删除" />
              <Tool icon="copy" text="复制" />
              <Tool icon="rename" text="重命名" />
              <Divider />
              <label htmlFor="floor">楼层</label>
              <Combo>
                <select id="floor"><option>首层</option></select>
                <Arrow />
              </Combo>
              <Divider />
              <Tool icon="sort" text="排序" drop="near" />
              <Tool icon="filter" text="过滤" drop="near" />
              <Divider />
              <Tool icon="fromFloor" text="从其他楼层复制构件" />
              <Tool icon="toFloor" text="复制构件到其他楼层" />
              <Divider />
              <Tool text="查找" drop />
              <Divider />
              <Tool icon="up" text="上移" dim />
              <Tool icon="down" text="下移" />
            </ToolGroup>
          </ToolRow>
          <Panels>
            <ListPanel>
              <SearchBar>
                <input type="text" aria-label="搜索构件" placeholder="搜索构件..." />
                <button aria-label="搜索"><Icon name="search" /></button>
              </SearchBar>
              <Tree $inset={2}>
                <Node>
                  <Icon name="expanded" />
                  <Stub />
                  <Icon name="wall" />
                  <NodeLabel>剪力墙</NodeLabel>
                </Node>
                {walls.map((w, i) => (
                  <Node key={w}>
                    <Rail $hidden />
                    <Branch $last={i === walls.length - 1} />
                    <Element $on={i === 0}>
                      <Icon name="gear" />
                      <NodeLabel>
                        <Song>{w}</Song>
                      </NodeLabel>
                    </Element>
                  </Node>
                ))}
              </Tree>
            </ListPanel>
            <Props>
              <TabStrip>
                <Tab>属性编辑</Tab>
              </TabStrip>
              <PropsBody>
                <GridFrame>
                  <PropertyGrid />
                </GridFrame>
              </PropsBody>
            </Props>
          </Panels>
        </Main>
      </Work>

      <StatusBar>
        <StatusCell $w={148} />
        <StatusCell $w={78}><Song>层高:4.5m</Song></StatusCell>
        <StatusCell $w={98}><Song>底标高:-0.03m</Song></StatusCell>
        <StatusCell $w={48}><Song>0</Song></StatusCell>
        <StatusCell><Song>格式:排数+直径+@+间距,不同直径用加号连接,例如2C12@200表示2排钢筋;本层锚固在钢筋信息前输入*</Song></StatusCell>
        <StatusCell $w={70}><Song>290.2 FPS</Song></StatusCell>
      </StatusBar>

      <TaskBar>
        <TaskButton aria-label="开始"><Icon name="windows" /></TaskButton>
        <TaskSearch>
          <Icon name="cortana" size={24} />
          <input type="text" aria-label="搜索" placeholder="在这里输入你要搜索的内容" />
          <button aria-label="语音"><Icon name="micLine" size={18} /></button>
        </TaskSearch>
        <AppButtons>
          <TaskButton aria-label="应用"><Icon name="pinwheel" size={24} /></TaskButton>
          <TaskButton aria-label="浏览器助手">
            <Icon name="swirl" size={22} />
            <Corner><Icon name="swirlBell" size={14} /></Corner>
          </TaskButton>
          <TaskButton aria-label="Edge"><Icon name="edge" size={22} /></TaskButton>
          <TaskButton aria-label="商店"><Icon name="store" size={22} /></TaskButton>
          <TaskButton aria-label="文件资源管理器"><Icon name="explorer" size={22} /></TaskButton>
          <TaskButton aria-label="G" $running><Icon name="gSwirl" size={24} /></TaskButton>
          <TaskButton aria-label="浏览器" $running><Icon name="ie" size={24} /></TaskButton>
          <TaskButton aria-label="广联达" $active><Icon name="logo" size={24} /></TaskButton>
        </AppButtons>
        <Tray>
          <Stack>50%<br />CPU使用</Stack>
          <Icon name="chevronUp" />
          <Icon name="battery" />
          <Icon name="wifi" />
          <Icon name="volume" />
          <span>英</span>
          <Push />
          <Icon name="sogou" />
          <Stack>20:01<br />2017/6/16</Stack>
          <NoticeButton aria-label="通知">
            <Icon name="notice" />
            <Count>6</Count>
          </NoticeButton>
        </Tray>
      </TaskBar>

      <InputMethod>
        <SogouMark><Icon name="sogou" size={28} /></SogouMark>
        英
        <Icon name="comma" />
        <Icon name="mic" />
        <Icon name="keyboard" />
        <Icon name="person" />
        <Icon name="shirt" />
        <Icon name="wrench" />
      </InputMethod>
      <SpeedBall>71</SpeedBall>
    </Screen>
  );
}
